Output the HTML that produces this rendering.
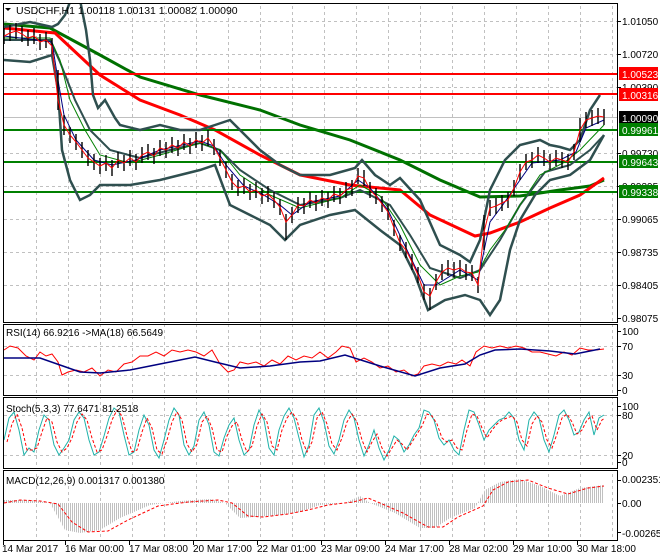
<!DOCTYPE html>
<html><head><meta charset="utf-8"><style>
html,body{margin:0;padding:0;background:#fff;}
svg{display:block;font-family:"Liberation Sans",sans-serif;font-size:10px;}
</style></head><body>
<svg width="660" height="560" viewBox="0 0 660 560" xmlns="http://www.w3.org/2000/svg">
<rect width="660" height="560" fill="#fff"/>
<defs>
<pattern id="vg" x="4" y="0" width="32" height="560" patternUnits="userSpaceOnUse">
<line x1="0.5" y1="0" x2="0.5" y2="560" stroke="#c0c0c0" stroke-dasharray="3,3"/>
</pattern>
<pattern id="hist" x="0" y="0" width="2" height="10" patternUnits="userSpaceOnUse">
<rect x="0" y="0" width="1" height="10" fill="#c0c0c0"/>
</pattern>
<clipPath id="cm"><rect x="4" y="4" width="613" height="318"/></clipPath>
</defs>
<g>
<rect x="36" y="4" width="581" height="318" fill="url(#vg)"/>
<rect x="36" y="325" width="581" height="70" fill="url(#vg)"/>
<rect x="36" y="398" width="581" height="70" fill="url(#vg)"/>
<rect x="36" y="471" width="581" height="69" fill="url(#vg)"/>
</g>
<g stroke="#c0c0c0" stroke-dasharray="3,3">
<line x1="4" y1="21.5" x2="617" y2="21.5"/><line x1="4" y1="54.5" x2="617" y2="54.5"/>
<line x1="4" y1="87.5" x2="617" y2="87.5"/><line x1="4" y1="153.5" x2="617" y2="153.5"/>
<line x1="4" y1="186.5" x2="617" y2="186.5"/><line x1="4" y1="219.5" x2="617" y2="219.5"/>
<line x1="4" y1="252.5" x2="617" y2="252.5"/><line x1="4" y1="285.5" x2="617" y2="285.5"/>
<line x1="4" y1="346.5" x2="617" y2="346.5"/><line x1="4" y1="375.5" x2="617" y2="375.5"/>
<line x1="4" y1="415.5" x2="617" y2="415.5"/><line x1="4" y1="455.5" x2="617" y2="455.5"/>
</g>
<g clip-path="url(#cm)" fill="none">
<polyline stroke="#007000" stroke-width="3" points="4,24 50,28 100,55 140,77 200,95 260,110 300,125 350,140 400,160 440,180 480,197 520,196 560,190 590,186 604,180"/>
<polyline stroke="#ff0000" stroke-width="3" points="4,28 55,33 100,75 140,100 180,115 215,130 260,155 300,175 350,185 400,190 430,215 475,236 490,233 520,222 550,208 580,195 604,178"/>
<line x1="4" y1="74" x2="617" y2="74" stroke="#ff0000" stroke-width="2"/>
<line x1="4" y1="94" x2="617" y2="94" stroke="#ff0000" stroke-width="2"/>
<line x1="4" y1="117.5" x2="617" y2="117.5" stroke="#c0c0c0"/>
<line x1="4" y1="130" x2="617" y2="130" stroke="#008000" stroke-width="2"/>
<line x1="4" y1="162" x2="617" y2="162" stroke="#008000" stroke-width="2"/>
<line x1="4" y1="192" x2="617" y2="192" stroke="#008000" stroke-width="2"/>
<polyline stroke="#2f4f4f" stroke-width="2.5" points="4,27 30,22 52,27 58,24 65,15 70,2 80,0 86,30 90,60 93,95 98,108 105,100 115,118 120,125 140,130 160,125 180,130 200,130 215,125 230,120 240,130 260,150 280,165 300,175 330,175 355,168 362,160 375,175 390,185 400,178 420,200 440,245 460,255 470,262 480,240 490,190 505,160 520,145 540,140 550,145 560,147 570,150 580,140 590,110 600,95"/>
<polyline stroke="#2f4f4f" stroke-width="2.5" points="4,60 30,62 52,55 58,90 62,150 70,180 80,200 90,195 100,185 130,185 160,180 200,170 215,165 230,205 250,215 270,225 285,240 300,225 330,215 355,210 380,230 400,245 415,275 428,310 445,300 465,295 480,300 490,315 500,300 510,250 520,220 535,195 550,180 570,175 590,160 604,135"/>
<polyline stroke="#2f4f4f" stroke-width="2" points="4,40 50,40 60,62 75,100 90,130 110,150 140,158 170,150 200,143 220,150 240,170 270,190 300,205 340,198 360,190 390,205 410,235 430,268 460,278 480,270 500,240 520,205 545,172 570,165 590,150 604,135"/>
<polyline stroke="#008000" stroke-width="1" points="4,38 50,38 60,60 70,100 85,130 100,155 130,163 160,155 200,143 220,150 240,175 270,195 300,208 340,198 360,185 380,196 400,225 420,265 440,285 460,276 478,272 490,250 505,230 520,205 540,175 565,162 580,150 604,125"/>
<polyline stroke="#000080" stroke-width="1" points="4,36 52,42 58,80 64,115 76,140 94,160 112,165 136,160 160,150 200,141 214,146 226,165 244,186 262,194 280,205 292,215 310,202 340,196 358,180 370,188 388,210 406,248 424,285 436,285 460,270 478,280 490,222 502,206 520,180 532,163 560,160 576,152 586,128 604,120"/>
<path stroke="#000" stroke-width="1.4" d="M4 28V44M10 25V41M16 23V39M22 26V42M28 30V46M34 28V44M40 34V50M46 32V48M52 38V54M58 70V110M64 115V135M70 127V143M76 134V150M82 142V158M88 150V166M94 154V170M100 158V174M106 155V171M112 160V176M118 152V168M124 155V171M130 150V166M136 154V170M142 147V163M148 144V160M154 148V164M160 140V156M166 142V158M172 137V153M178 140V156M184 134V150M190 138V154M196 132V148M202 135V151M208 130V146M214 139V155M220 150V166M226 162V178M232 174V190M238 180V196M244 178V194M250 184V200M256 182V198M262 188V204M268 186V202M274 192V208M280 199V215M286 214V240M292 207V223M298 197V213M304 198V214M310 192V208M316 195V211M322 190V206M328 192V208M334 186V202M340 188V204M346 182V198M352 180V196M358 168V184M364 170V186M370 182V198M376 188V204M382 196V212M388 204V220M394 220V236M400 235V251M406 242V258M412 254V270M418 267V283M424 284V300M430 288V310M436 274V290M442 264V280M448 260V276M454 262V278M460 260V276M466 264V280M472 265V281M478 277V293M484 215V250M490 200V216M496 198V214M502 195V211M508 192V208M514 180V196M520 164V180M526 154V170M532 152V168M538 147V163M544 150V166M550 154V170M556 150V166M562 152V168M568 154V170M574 144V160M580 118V142M586 112V128M592 110V126M598 108V124M604 109V125"/>
<polyline stroke="#ff0000" stroke-width="1" points="4,36 10,33 16,31 22,34 28,38 34,36 40,42 46,40 52,46 58,100 64,125 70,135 76,142 82,150 88,158 94,162 100,166 106,163 112,168 118,160 124,163 130,158 136,162 142,155 148,152 154,156 160,148 166,150 172,145 178,148 184,142 190,146 196,140 202,143 208,138 214,147 220,158 226,170 232,182 238,188 244,186 250,192 256,190 262,196 268,194 274,200 280,207 286,222 292,215 298,205 304,206 310,200 316,203 322,198 328,200 334,194 340,196 346,190 352,188 358,176 364,178 370,190 376,196 382,204 388,212 394,228 400,243 406,250 412,262 418,275 424,292 430,296 436,282 442,272 448,268 454,270 460,268 466,272 472,273 478,285 484,232 490,208 496,206 502,203 508,200 514,188 520,172 526,162 532,160 538,155 544,158 550,162 556,158 562,160 568,162 574,152 580,130 586,120 592,118 598,116 604,117"/>
</g>
<!-- RSI -->
<g fill="none">
<polyline stroke="#ff0000" stroke-width="1" points="4,350 10,346 18,348 26,356 34,360 40,352 46,356 52,354 58,362 62,375 68,372 76,370 84,372 92,368 100,376 108,370 116,372 124,364 132,362 140,356 148,356 156,352 164,356 172,350 180,352 188,350 196,352 204,356 212,350 220,364 228,372 234,370 240,362 248,364 256,362 264,366 272,360 280,364 288,356 296,360 304,356 312,358 320,352 328,358 336,352 342,346 350,348 356,362 364,358 372,362 380,368 388,366 396,372 404,370 412,376 418,374 424,366 432,364 440,366 448,362 456,364 462,360 470,366 476,352 484,346 492,348 500,346 508,348 516,346 524,348 532,352 540,352 548,354 556,356 564,352 572,355 580,348 588,350 596,350 604,349"/>
<polyline stroke="#000080" stroke-width="1.5" points="4,358 40,358 60,365 80,372 100,373 130,370 165,363 195,357 215,362 240,368 270,366 300,362 320,361 345,355 380,366 415,376 440,368 465,364 480,355 495,350 520,349 550,351 575,354 600,349"/>
</g>
<!-- Stoch -->
<g fill="none">
<polyline stroke="#20b2aa" stroke-width="1" points="4,440 9,418 14,412 19,430 24,455 29,448 34,452 39,430 44,415 49,420 54,445 59,455 64,448 69,440 74,420 79,412 84,418 89,440 94,455 99,452 104,436 109,418 114,408 119,412 124,435 129,455 134,452 139,430 144,415 149,425 154,450 159,458 164,440 169,420 174,408 179,415 184,445 189,455 194,446 199,420 204,412 209,425 214,452 219,456 224,438 229,425 234,418 239,440 244,455 249,450 254,425 259,410 264,420 269,448 274,455 279,430 284,416 289,408 294,418 299,438 304,457 309,445 314,415 319,408 324,422 329,446 334,454 339,440 344,420 349,410 354,418 359,440 364,456 369,445 374,430 379,448 384,460 389,450 394,436 399,440 404,452 409,445 414,435 419,428 424,410 429,412 434,420 439,438 444,445 449,440 454,450 459,455 464,430 469,410 474,412 479,425 484,440 489,430 494,425 499,420 504,418 509,412 514,418 519,440 524,450 529,420 534,412 539,418 544,440 549,452 554,435 559,415 564,410 569,420 574,435 579,432 584,420 589,412 594,435 599,418 604,415"/>
<polyline stroke="#ff0000" stroke-width="1" stroke-dasharray="3,2" points="7,442 12,424 17,414 22,428 27,450 32,450 37,448 42,432 47,418 52,422 57,442 62,452 67,448 72,438 77,422 82,414 87,420 92,438 97,452 102,450 107,436 112,420 117,410 122,416 127,436 132,452 137,450 142,432 147,418 152,428 157,450 162,454 167,440 172,422 177,412 182,420 187,444 192,452 197,444 202,422 207,416 212,428 217,450 222,452 227,436 232,426 237,422 242,440 247,452 252,446 257,426 262,414 267,422 272,446 277,450 282,430 287,418 292,412 297,420 302,440 307,452 312,442 317,418 322,412 327,424 332,444 337,450 342,438 347,422 352,414 357,422 362,440 367,452 372,442 377,434 382,448 387,456 392,448 397,440 402,444 407,450 412,442 417,434 422,426 427,414 432,416 437,424 442,438 447,442 452,440 457,448 462,450 467,430 472,414 477,416 482,428 487,438 492,430 497,424 502,420 507,418 512,416 517,422 522,440 527,446 532,424 537,416 542,422 547,440 552,448 557,434 562,418 567,414 572,422 577,434 582,430 587,420 592,416 597,430 602,420 605,418"/>
</g>
<!-- MACD -->
<polygon fill="url(#hist)" points="4,503 4,500 30,500 50,503 65,530 80,533 100,530 120,518 150,505 180,501 210,499 225,503 240,518 255,517 280,515 300,512 320,505 345,503 360,496 370,503 395,513 420,528 435,528 450,518 475,508 485,490 500,482 520,479 540,486 560,496 580,488 604,485 604,503"/>
<polyline fill="none" stroke="#ff0000" stroke-width="1" stroke-dasharray="3,2" points="4,503 20,500 40,501 58,504 72,522 88,532 108,531 128,520 158,506 188,502 218,500 232,503 248,516 263,517 288,514 308,510 328,505 353,502 368,498 380,503 403,513 428,527 443,527 458,517 483,506 493,490 508,482 528,480 548,488 568,494 588,488 604,486"/>
<!-- frames -->
<g fill="none" stroke="#000" stroke-width="1">
<rect x="3.5" y="3.5" width="614" height="319"/>
<rect x="3.5" y="324.5" width="614" height="71"/>
<rect x="3.5" y="397.5" width="614" height="71"/>
<rect x="3.5" y="470.5" width="614" height="70"/>
</g>
<path stroke="#000" d="M617 21.5h4M617 54.5h4M617 87.5h4M617 153.5h4M617 186.5h4M617 219.5h4M617 252.5h4M617 285.5h4M617 318.5h4M617 331.5h4M617 346.5h4M617 375.5h4M617 390.5h4M617 406.5h4M617 415.5h4M617 455.5h4M617 462.5h4M617 480.5h4M617 503.5h4M617 532.5h4M3.5 541v4M65.5 541v4M129.5 541v4M193.5 541v4M257.5 541v4M321.5 541v4M385.5 541v4M449.5 541v4M513.5 541v4M577.5 541v4"/>
<path d="M5 8 L11 8 L8 11 Z" fill="#000"/>
<text x="16" y="14" font-size="10.5">USDCHF,H1  1.00118 1.00131 1.00082 1.00090</text>
<text x="6" y="336">RSI(14) 66.9216  -&gt;MA(18) 66.5649</text>
<text x="6" y="412">Stoch(5,3,3) 77.6471 81.2518</text>
<text x="6" y="484">MACD(12,26,9) 0.001317 0.001380</text>
<g fill="#000">
<text x="622" y="25">1.01050</text><text x="622" y="58">1.00720</text><text x="622" y="91">1.00390</text>
<text x="622" y="157">0.99730</text><text x="622" y="190">0.99395</text><text x="622" y="223">0.99065</text>
<text x="622" y="256">0.98735</text><text x="622" y="289">0.98405</text><text x="622" y="322">0.98075</text>
</g>
<rect x="619" y="67" width="39" height="13" fill="#ff0000"/><text x="622" y="78" fill="#fff">1.00523</text>
<rect x="619" y="88" width="39" height="13" fill="#ff0000"/><text x="622" y="99" fill="#fff">1.00316</text>
<rect x="619" y="111" width="39" height="13" fill="#000"/><text x="622" y="122" fill="#fff">1.00090</text>
<rect x="619" y="123" width="39" height="13" fill="#008000"/><text x="622" y="134" fill="#fff">0.99961</text>
<rect x="619" y="155" width="39" height="13" fill="#008000"/><text x="622" y="166" fill="#fff">0.99643</text>
<rect x="619" y="185" width="39" height="13" fill="#008000"/><text x="622" y="196" fill="#fff">0.99338</text>
<text x="622" y="335">100</text><text x="622" y="350">70</text><text x="622" y="379">30</text><text x="622" y="394">0</text>
<text x="622" y="410">100</text><text x="622" y="419">80</text><text x="622" y="459">20</text><text x="622" y="466">0</text>
<text x="622" y="483">0.002351</text><text x="622" y="507">0.00</text><text x="622" y="537">-0.002656</text>
<g font-size="10">
<text x="2" y="552">14 Mar 2017</text>
<text x="65" y="552">16 Mar 00:00</text>
<text x="129" y="552">17 Mar 08:00</text>
<text x="193" y="552">20 Mar 17:00</text>
<text x="257" y="552">22 Mar 01:00</text>
<text x="321" y="552">23 Mar 09:00</text>
<text x="385" y="552">24 Mar 17:00</text>
<text x="449" y="552">28 Mar 02:00</text>
<text x="513" y="552">29 Mar 10:00</text>
<text x="577" y="552">30 Mar 18:00</text>
</g>
</svg>
</body></html>
